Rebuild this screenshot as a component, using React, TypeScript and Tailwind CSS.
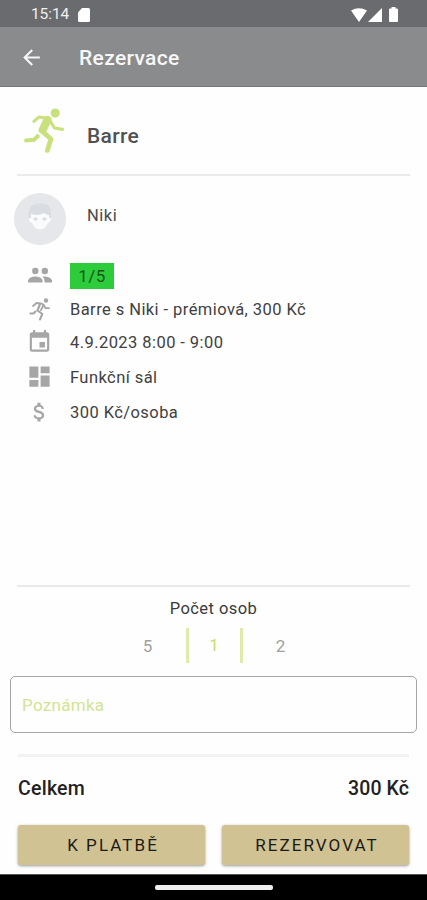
import type { ReactNode } from 'react';
import { MdArrowBack, MdAttachMoney, MdDashboard, MdEvent } from 'react-icons/md';

function StatusBar() {
  return (
    <div className="flex h-[27px] items-center bg-[#6a6b6e] pl-[31px] pr-[29px] pt-[2px] text-white">
      <span className="w-[39px] whitespace-nowrap pt-[1px] text-[15.5px] leading-none tracking-[-0.1px] text-[#f0f0f0]">15:14</span>
      <svg className="ml-[8px] h-[14px] w-[12px]" viewBox="0 0 12 14" fill="currentColor">
        <path d="M4 0h6.5Q12 0 12 1.5v11Q12 14 10.5 14h-9Q0 14 0 12.5V4.5z" />
      </svg>
      <svg className="ml-auto h-[14px] w-[16px]" viewBox="0 0 17 14" preserveAspectRatio="none" fill="currentColor">
        <path d="M0 2.500Q8.500-1.800 17 2.500L8.500 14z" />
      </svg>
      <svg className="ml-[1px] h-[14px] w-[14px]" viewBox="0 0 14 14" fill="currentColor">
        <path d="M14 0v14H0z" />
      </svg>
      <svg className="ml-[7px] h-[15px] w-[9px]" viewBox="0 0 9 15" fill="currentColor">
        <path d="M2.500 0h4v1.500H8q1 0 1 1V14q0 1-1 1H1q-1 0-1-1V2.500q0-1 1-1h1.500z" />
      </svg>
    </div>
  );
}

function Runner() {
  return (
    <svg className="h-[48px] w-[44px]" viewBox="22 106 44 48" fill="none" stroke="#c8e17c" strokeLinecap="round" strokeLinejoin="round">
      <circle cx="55.200" cy="113" r="4.600" fill="#c8e17c" stroke="none" />
      <path d="M33.800 121.300l5.400-4.300 8.800 1.400" strokeWidth="3" />
      <path d="M49.500 120l5 8 8 1.300" strokeWidth="3.200" />
      <path d="M47.500 119.800l-4.900 10.200" strokeWidth="8" />
      <path d="M37.700 136.200l-3.700 3.600-8 .8" strokeWidth="4" />
      <path d="M43 132l8 7-3.700 11.400" strokeWidth="4.800" />
    </svg>
  );
}

function SmallRunner() {
  return (
    <svg className="h-[24px] w-[24px]" viewBox="0 0 24 24" fill="none" stroke="currentColor" strokeLinecap="round" strokeLinejoin="round">
      <circle cx="18" cy="3.500" r="2.200" fill="currentColor" stroke="none" />
      <path d="M5 9l3.500-3 5.500.7 1.500 1 2 3.500h3.500" strokeWidth="1.800" />
      <path d="M12 7l-2.500 6.500 4.800 3.500-2.300 5.500" strokeWidth="2.100" />
      <path d="M15.500 8l-2.600 5.200" strokeWidth="1.800" />
      <path d="M7.500 14.500l-2 2H2.500" strokeWidth="2.100" />
    </svg>
  );
}

function People() {
  return (
    <svg className="mt-[2px] h-[18px] w-[24px]" viewBox="0 0 24 18" fill="currentColor">
      <circle cx="7.300" cy="4" r="3.200" />
      <circle cx="16.800" cy="4" r="3.200" />
      <path d="M0 15.500v-2.200Q1.500 9.500 7.300 9.500q6 0 7.200 3.800v2.200z" />
      <path d="M14.300 9.500Q22.500 9 24 13.300v2.200h-7.500v-2.200q-.2-2.300-2.200-3.800z" />
    </svg>
  );
}

function Avatar() {
  return (
    <svg className="h-[52px] w-[52px]" viewBox="0 0 52 52">
      <circle cx="26" cy="26" r="26" fill="#e5e7eb" />
      <path d="M14.500 25v-5q1-8 8-9 2-1 7-.3 7 .5 7.500 8V25z" fill="#d9dce1" />
      <path d="M17 21q8 2.500 13-1 2 2 5 2v3q3-.5 2 2-.8 2.500-3 3-2.500 6-8 6.500-5.500-.5-8-6.500-2.500-.5-3.200-3-.5-2.300 2.200-2z" fill="#fafbfc" />
      <ellipse cx="21.500" cy="26" rx="2.200" ry="1.800" fill="#dcdfe4" />
      <ellipse cx="30.500" cy="26" rx="2.200" ry="1.800" fill="#dcdfe4" />
    </svg>
  );
}

function DetailRow({ icon, height, children }: { icon: ReactNode; height: string; children: ReactNode }) {
  return (
    <div className={`flex items-center ${height}`}>
      <div className="flex w-[70px] justify-center pl-[9px] text-[#a6a6a6]">{icon}</div>
      <span className="whitespace-nowrap pt-[2px] text-[16.5px] tracking-[0.43px] text-[#414141]">{children}</span>
    </div>
  );
}

function ActionButton({ children }: { children: ReactNode }) {
  return (
    <button className="h-[40px] flex-1 rounded-[3px] bg-[#d1c293] pl-[3px] pt-[1px] text-[17px] tracking-[2.050px] text-[#1c1a14] shadow-[0_1px_3px_rgba(0,0,0,0.4)]">
      {children}
    </button>
  );
}

export default function App() {
  return (
    <div className="flex h-[900px] w-[427px] flex-col overflow-hidden bg-[#fefefe] font-['Roboto',sans-serif]">
      <StatusBar />
      <header className="flex h-[60px] items-center border-b border-[#777877] bg-[#8a8b8c] pl-[19px] pt-[3px] text-[#f7f7f7]">
        <MdArrowBack className="mb-[2px] h-[25px] w-[25px]" />
        <h1 className="ml-[35px] pt-[2px] text-[21px] font-medium tracking-[0.35px]">Rezervace</h1>
      </header>

      <section className="mx-[17px] flex h-[89px] items-start border-b-2 border-[#eaeaea] pl-[5px] pt-[19px]">
        <Runner />
        <h2 className="ml-[21px] mt-[15px] text-[21px] font-medium leading-[30px] tracking-[0.3px] text-[#505153]">Barre</h2>
      </section>

      <section className="flex h-[82px] items-start pl-[14px] pt-[17px]">
        <Avatar />
        <span className="ml-[21px] mt-[13px] text-[16.5px] leading-[20px] tracking-[0.5px] text-[#4a4a4a]">Niki</span>
      </section>

      <section className="h-[327px]">
        <DetailRow height="h-[34px]" icon={<People />}>
          <span className="flex h-[26px] w-[44px] items-center justify-center bg-[#2dcc3b] pt-[1px] text-[17px] text-[#14541b]">1/5</span>
        </DetailRow>
        <DetailRow height="h-[34px]" icon={<SmallRunner />}>Barre s Niki - prémiová, 300 Kč</DetailRow>
        <DetailRow height="h-[33px]" icon={<MdEvent className="mb-[2px] h-[26px] w-[27px]" />}>4.9.2023 8:00 - 9:00</DetailRow>
        <DetailRow height="h-[36px]" icon={<MdDashboard className="mb-[1px] h-[27px] w-[27px]" />}>Funkční sál</DetailRow>
        <DetailRow height="h-[34px]" icon={<MdAttachMoney className="mb-[1px] h-[26px] w-[25px]" />}>300 Kč/osoba</DetailRow>
      </section>

      <section className="mx-[17px] flex h-[91px] flex-col items-center border-t-2 border-[#eaeaea] pt-[10px]">
        <h3 className="text-[16.5px] leading-[24px] tracking-[0.45px] text-[#3a3a3a]">Počet osob</h3>
        <div className="mt-[7px] flex h-[35px] items-center text-[17px] text-[#a1a1a1]">
          <span className="w-[77px] pt-[2px] text-center">5</span>
          <span className="flex h-full w-[57px] items-center justify-center border-x-[3px] border-[#dfebab] pr-[1px] text-[#c6dc75]">1</span>
          <span className="w-[75px] pt-[2px] text-center">2</span>
        </div>
      </section>

      <div className="mx-[10px] flex h-[57px] items-center rounded-[5px] border-[1.500px] border-[#a5a5a5] pl-[11px] pt-[2px] text-[17px] tracking-[0.3px] text-[#d2e493]">
        Poznámka
      </div>

      <footer className="mx-[18px] mt-[21px] flex h-[120px] flex-col border-t-[3px] border-[#f2f2f2]">
        <div className="mt-[16px] flex h-[29px] items-center justify-between text-[19.5px] font-medium text-[#222]">
          <span className="pt-[2px] tracking-[0.25px]">Celkem</span>
          <span className="pt-[2px] tracking-[0.1px]">300 Kč</span>
        </div>
        <div className="mt-[23px] flex gap-[17px]">
          <ActionButton>K PLATBĚ</ActionButton>
          <ActionButton>REZERVOVAT</ActionButton>
        </div>
      </footer>

      <nav className="flex flex-1 justify-center border-t border-[#555] bg-black pt-[10px]">
        <div className="h-[5px] w-[118px] rounded-[2px] bg-[#eeeeee]" />
      </nav>
    </div>
  );
}
